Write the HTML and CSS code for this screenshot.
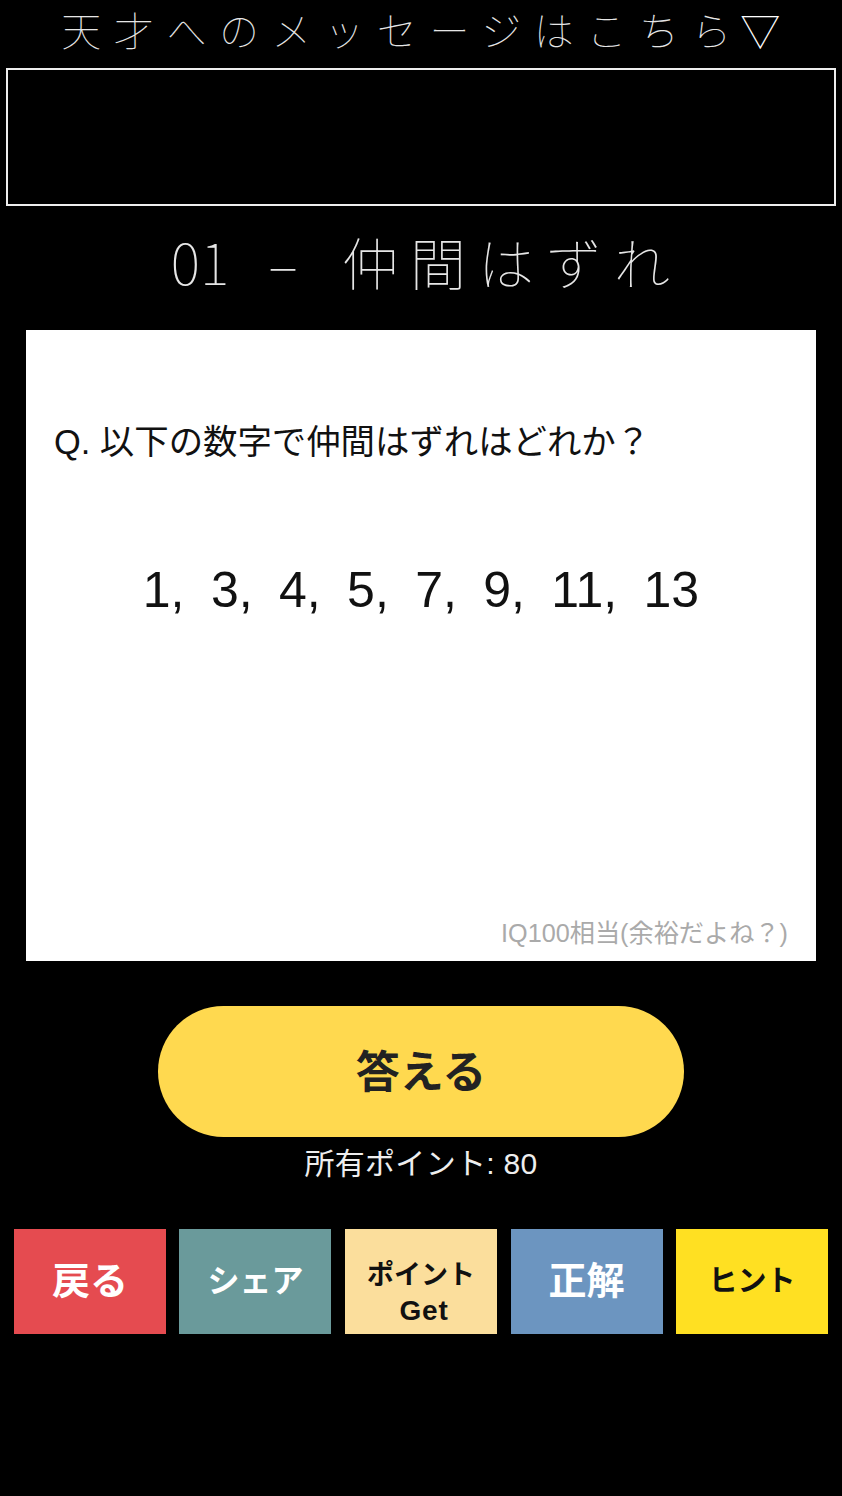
FILE: index.html
```html
<!DOCTYPE html>
<html lang="ja">
<head>
    <meta charset="UTF-8">
    <meta name="viewport" content="width=device-width, initial-scale=1.0">
    <title>仲間はずれ</title>
    <link rel="stylesheet" href="styles.css">
</head>
<body>
    <div class="container">
        <a class="message-link">天才へのメッセージはこちら<span class="arrow">▽</span></a>
        <div class="message-box"></div>
        <h1 class="stage-title"><span class="stage-num">01</span> <span class="stage-dash">–</span> 仲間はずれ</h1>

        <div class="question-card">
            <p class="question">Q. 以下の数字で仲間はずれはどれか？</p>
            <p class="numbers">1, 3, 4, 5, 7, 9, 11, 13</p>
            <p class="level">IQ100相当(余裕だよね？)</p>
        </div>

        <button class="answer-btn">答える</button>
        <p class="points">所有ポイント: 80</p>

        <div class="tiles">
            <button class="tile back">戻る</button>
            <button class="tile share">シェア</button>
            <button class="tile get">ポイント<br><span class="get-word">Get</span></button>
            <button class="tile correct">正解</button>
            <button class="tile hint">ヒント</button>
        </div>
    </div>
</body>
</html>
```

FILE: styles.css
```css
* {
    box-sizing: border-box;
}
body {
    margin: 0;
    background-color: #000;
    color: white;
    font-family: "Liberation Sans", "Noto Sans CJK JP", sans-serif;
}
.container {
    width: 842px;
    height: 1496px;
    display: flex;
    flex-direction: column;
    align-items: center;
}
.message-link {
    height: 68px;
    padding: 0 0 10px 12px;
    display: flex;
    align-items: center;
    font-family: "Noto Sans CJK JP", sans-serif;
    font-weight: 100;
    font-size: 40px;
    letter-spacing: 12.6px;
    line-height: 1;
    color: #e6e6e6;
    white-space: nowrap;
}
.arrow {
    margin-left: -4px;
    color: #fff;
}
.message-box {
    width: 830px;
    height: 138px;
    flex-shrink: 0;
    border: 2px solid #eee;
}
.stage-title {
    height: 124px;
    margin: 0;
    padding: 0 0 14px 11px;
    display: flex;
    align-items: center;
    font-family: "Noto Sans CJK JP", sans-serif;
    font-weight: 100;
    font-size: 56px;
    letter-spacing: 12px;
    line-height: 1;
    color: #e6e6e6;
    white-space: pre;
}
.stage-num {
    letter-spacing: 0;
}
.stage-dash {
    margin: 0 8px 0 39px;
}
.question-card {
    width: 790px;
    height: 631px;
    flex-shrink: 0;
    background: white;
    color: #111;
    position: relative;
    padding: 0 28px;
}
.question {
    margin: 90px 0 0;
    font-size: 34.4px;
    line-height: 44px;
}
.numbers {
    margin: 96px 0 0;
    text-align: center;
    font-size: 50px;
    line-height: 60px;
    word-spacing: 12.5px;
    color: #111;
}
.level {
    position: absolute;
    right: 28px;
    bottom: 10px;
    margin: 0;
    font-size: 25.2px;
    line-height: 36px;
    color: #aaa;
}
.answer-btn {
    width: 526px;
    height: 131px;
    flex-shrink: 0;
    margin-top: 45px;
    padding: 0 0 5px;
    border: none;
    border-radius: 66px;
    background-color: #FFD94F;
    color: #222;
    font-family: inherit;
    font-size: 44px;
    font-weight: bold;
}
.points {
    margin: 8px 0 0;
    font-size: 30px;
    line-height: 38px;
    letter-spacing: 0.3px;
    color: #eee;
}
.tiles {
    width: 814.2px;
    margin-top: 46px;
    display: flex;
    justify-content: space-between;
}
.tile {
    width: 152px;
    height: 105px;
    padding: 0;
    border: none;
    font-family: inherit;
    font-weight: bold;
    font-size: 38px;
    line-height: 1.1;
    color: white;
}
.back { background-color: #E54B50; }
.share { background-color: #6A9A9B; font-size: 32px; }
.get {
    padding-top: 24px;
    background-color: #FBDE9C;
    color: #111;
    font-size: 27px;
    line-height: 35px;
}
.get-word {
    margin-left: 6px;
    font-size: 28px;
    letter-spacing: 0.8px;
}
.correct { background-color: #6C95C0; }
.hint { background-color: #FFE022; color: #111; font-size: 29px; }
```
